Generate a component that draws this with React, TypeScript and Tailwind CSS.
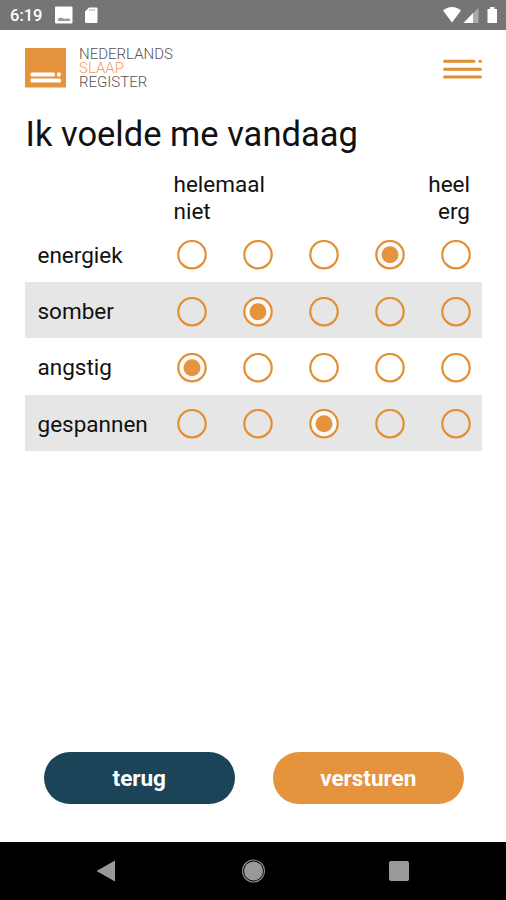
import React, { useState } from 'react';

const questions = ['energiek', 'somber', 'angstig', 'gespannen'];
const scale = [0, 1, 2, 3, 4];

const StatusBar: React.FC = () => (
  <div className="flex h-[30px] shrink-0 items-center bg-[#757575] pl-[10px] pr-[8px] text-white">
    <span className="w-[44px] pt-[2px] text-[16.500px] font-medium leading-none">6:19</span>
    <svg width="44" height="18" viewBox="0 0 44 18" fill="currentColor">
      <path d="M2 .5h15.500a1 1 0 0 1 1 1v15a1 1 0 0 1-1 1H2a1 1 0 0 1-1-1v-15a1 1 0 0 1 1-1z" />
      <path d="M4 12.500l3-1 3 1.200 5.500-.2 1 2.500H4z" fill="#999" />
      <path d="M35 1.500h7.500a1 1 0 0 1 1 1V16a1 1 0 0 1-1 1H32a1 1 0 0 1-1-1V5.500z" />
      <path d="M35.300 3.200h1.200v1.500h-1.200zM37.500 3.200h1.200v1.500h-1.200zM39.700 3.200h1.200v1.500h-1.200z" fill="#999" />
    </svg>
    <svg className="ml-auto" width="56" height="18" viewBox="0 0 56 18" fill="currentColor">
      <path d="M1 4.500C6-.2 14-.2 19 4.500L10 16.500z" />
      <path d="M36.500 2v15h-15z" opacity=".4" />
      <path d="M31 7V17h-9.500z" />
      <path d="M45.500 3h2.500V1h4.500v2h2.500v14h-9.500z" />
    </svg>
  </div>
);

const Header: React.FC = () => (
  <header className="flex h-[78px] shrink-0 items-center pl-[25px] pr-[24px]">
    <svg className="mb-[2px]" width="41" height="40" viewBox="0 0 41 40">
      <rect width="41" height="39.500" fill="#e6933e" />
      <rect x="5.500" y="24.500" width="24.500" height="4" rx="1.500" fill="#fff" />
      <rect x="32" y="24.500" width="3.700" height="4" rx="1" fill="#fff" />
      <rect x="5.500" y="30.500" width="30.500" height="4" rx="1.500" fill="#fff" />
    </svg>
    <div className="mb-[2px] ml-[13px] text-[15px] font-light leading-[14px] text-[#555]">
      <div>NEDERLANDS</div>
      <div className="text-[#f59a68]">SLAAP</div>
      <div>REGISTER</div>
    </div>
    <button className="ml-auto" aria-label="Menu">
      <svg width="39" height="20" viewBox="0 0 39 20" stroke="#df9030" strokeWidth="3" strokeLinecap="round">
        <path d="M1.500 2.300H31M36.800 2.300h.7M1.500 10.200h36M1.500 17.900h36" />
      </svg>
    </button>
  </header>
);

interface RadioProps {
  checked: boolean;
  onSelect: () => void;
}

const Radio: React.FC<RadioProps> = ({ checked, onSelect }) => (
  <button role="radio" aria-checked={checked} onClick={onSelect}>
    <svg width="30" height="30" viewBox="0 0 30 30">
      <circle cx="15" cy="14.700" r="13.700" fill={checked ? '#fafafa' : 'none'} stroke="#e38f35" strokeWidth="2.200" />
      {checked && <circle cx="15" cy="14.700" r="8.500" fill="#e6933e" />}
    </svg>
  </button>
);

const App: React.FC = () => {
  const [answers, setAnswers] = useState([3, 1, 0, 2]);

  const select = (row: number, value: number) =>
    setAnswers(answers.map((answer, index) => (index === row ? value : answer)));

  return (
    <div className="flex h-[900px] w-[506px] flex-col bg-white font-['Roboto',sans-serif] text-[#111]">
      <StatusBar />
      <Header />

      <main className="flex flex-1 flex-col pl-[25px] pr-[24px]">
        <h1 className="h-[62px] pl-[0.500px] text-[34.500px] leading-[53px]">Ik voelde me vandaag</h1>

        {/* Scale legend */}
        <div className="flex h-[55.600px] justify-between pl-[148.500px] pr-[12px] pt-px text-[22.500px] leading-[27px]">
          <div>helemaal<br />niet</div>
          <div className="text-right">heel<br />erg</div>
        </div>

        <div>
          {questions.map((question, row) => (
            <div key={question} className="flex h-[56.400px] items-center pl-[12.500px] pr-[11.500px] even:bg-[#e6e6e6]">
              <span className="w-[139.500px] pt-[2px] text-[22.500px] leading-none">{question}</span>
              <div className="flex flex-1 justify-between pt-[3px]">
                {scale.map((value) => (
                  <Radio key={value} checked={answers[row] === value} onSelect={() => select(row, value)} />
                ))}
              </div>
            </div>
          ))}
        </div>
      </main>

      {/* Actions */}
      <div className="flex h-[90.500px] shrink-0 justify-between pl-[43.500px] pr-[42px] text-[22.500px] font-bold text-white">
        <button className="h-[52.500px] w-[191.500px] rounded-full bg-[#1b4459] pt-[2px]">terug</button>
        <button className="h-[52.500px] w-[191.500px] rounded-full bg-[#e6933e] pt-[2px]">versturen</button>
      </div>

      {/* Android navigation bar */}
      <nav className="flex h-[58px] shrink-0 items-center justify-between bg-black pl-[96px] pr-[97px]">
        <svg width="20" height="22" viewBox="0 0 20 22">
          <path d="M.5 11L19 .5v21z" fill="#999" />
        </svg>
        <svg width="24" height="24" viewBox="0 0 24 24">
          <circle cx="12.500" cy="12" r="11" fill="none" stroke="#888" strokeWidth="1.200" />
          <circle cx="12.500" cy="12" r="9.500" fill="#999" />
        </svg>
        <span className="size-[20px] rounded-[2px] bg-[#999]" />
      </nav>
    </div>
  );
};

export default App;
